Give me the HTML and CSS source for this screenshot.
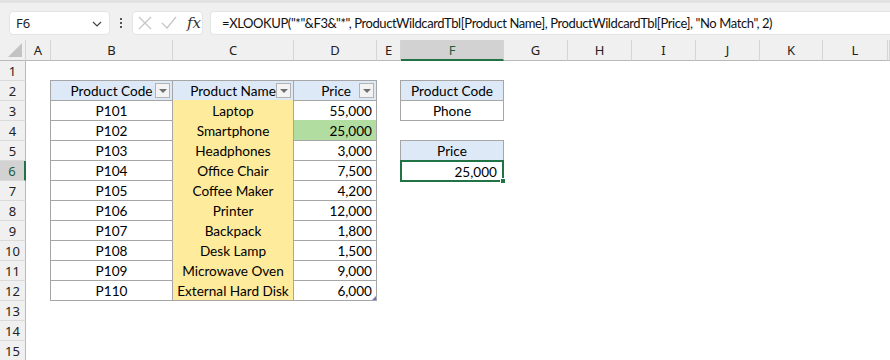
FILE: index.html
```html
<!DOCTYPE html>
<html>
<head>
<meta charset="utf-8">
<link rel="stylesheet" href="styles.css">
</head>
<body>
<div class="toolbar">
  <div class="namebox"><span>F6</span>
    <svg class="chev" width="10" height="6" viewBox="0 0 10 6"><path d="M1 1 L5 5 L9 1" fill="none" stroke="#444" stroke-width="1.2"/></svg>
  </div>
  <div class="dots"><i></i><i></i><i></i></div>
  <div class="iconbox">
    <svg width="14" height="14" viewBox="0 0 14 14"><path d="M1 1 L13 13 M13 1 L1 13" stroke="#c4c4c4" stroke-width="1.2" fill="none"/></svg>
    <svg width="16" height="14" viewBox="0 0 16 14"><path d="M1 7 L6 12 L15 1" stroke="#c4c4c4" stroke-width="1.2" fill="none"/></svg>
    <span class="fx">fx</span>
  </div>
  <div class="formula">=XLOOKUP("*"&amp;F3&amp;"*", ProductWildcardTbl[Product Name], ProductWildcardTbl[Price], "No Match", 2)</div>
</div>
<div class="sheet">
  <div class="corner"><svg width="14" height="14" viewBox="0 0 14 14"><path d="M14 0 L14 14 L0 14 Z" fill="#c3c3c3"/></svg></div>
  <div class="ch">A</div><div class="ch">B</div><div class="ch">C</div><div class="ch">D</div><div class="ch">E</div><div class="ch sel">F</div><div class="ch">G</div><div class="ch">H</div><div class="ch">I</div><div class="ch">J</div><div class="ch">K</div><div class="ch">L</div><div class="ch"></div>

  <div class="rh r1">1</div><div class="rh r2">2</div><div class="rh r3">3</div><div class="rh r4">4</div><div class="rh r5">5</div><div class="rh r6 sel">6</div><div class="rh r7">7</div><div class="rh r8">8</div><div class="rh r9">9</div><div class="rh r10">10</div><div class="rh r11">11</div><div class="rh r12">12</div><div class="rh r13">13</div><div class="rh r14">14</div><div class="rh r15">15</div>

  <div class="c th cB r2 top left">Product Code<span class="fb"></span></div>
  <div class="c th cC r2 top">Product Name<span class="fb"></span></div>
  <div class="c th num cD r2 top">Price<span class="fb"></span></div>

  <div class="c cB r3 left">P101</div><div class="c y cC r3">Laptop</div><div class="c num cD r3">55,000</div>
  <div class="c cB r4 left">P102</div><div class="c y cC r4">Smartphone</div><div class="c num g cD r4">25,000</div>
  <div class="c cB r5 left">P103</div><div class="c y cC r5">Headphones</div><div class="c num cD r5">3,000</div>
  <div class="c cB r6 left">P104</div><div class="c y cC r6">Office Chair</div><div class="c num cD r6">7,500</div>
  <div class="c cB r7 left">P105</div><div class="c y cC r7">Coffee Maker</div><div class="c num cD r7">4,200</div>
  <div class="c cB r8 left">P106</div><div class="c y cC r8">Printer</div><div class="c num cD r8">12,000</div>
  <div class="c cB r9 left">P107</div><div class="c y cC r9">Backpack</div><div class="c num cD r9">1,800</div>
  <div class="c cB r10 left">P108</div><div class="c y cC r10">Desk Lamp</div><div class="c num cD r10">1,500</div>
  <div class="c cB r11 left">P109</div><div class="c y cC r11">Microwave Oven</div><div class="c num cD r11">9,000</div>
  <div class="c cB r12 left">P110</div><div class="c y cC r12">External Hard Disk</div><div class="c num cD r12">6,000<span class="rsz"></span></div>

  <div class="c th cF r2 top left">Product Code</div>
  <div class="c cF r3 left">Phone</div>
  <div class="c th cF r5 top left">Price</div>
  <div class="c num cF r6 left active">25,000<span class="handle"></span></div>
</div>
</body>
</html>
```
FILE: styles.css
```css
* { box-sizing: border-box; }
html, body { margin: 0; padding: 0; }
body {
  width: 890px; height: 360px; overflow: hidden;
  background: #ffffff;
  font-family: "Lato", "Liberation Sans", sans-serif;
}
.toolbar {
  height: 40px;
  background: #f0f0f0;
  border-top: 3px solid #e2e2e2;
  display: flex;
  align-items: center;
  padding: 3px 0 0 9px;
  gap: 0;
}
.namebox {
  width: 101px; height: 24px;
  background: #fff;
  border: 1px solid #e4e4e4;
  border-radius: 4px;
  display: flex; align-items: center; justify-content: space-between;
  padding: 0 7px 0 6px;
  font-family: "Noto Sans", sans-serif;
  font-size: 13px; color: #222;
}
.chev { margin-top: 1px; }
.dots {
  width: 22px; display: flex; flex-direction: column; align-items: center; gap: 2px;
}
.dots i { width: 2px; height: 2px; background: #555; display: block; }
.iconbox {
  width: 71px; height: 24px;
  background: #fff;
  border: 1px solid #e4e4e4;
  border-radius: 4px;
  display: flex; align-items: center;
  padding: 0 0 0 5px; gap: 9px;
}
.fx {
  font-family: "DejaVu Serif", "Liberation Serif", serif;
  font-style: italic; font-size: 15px; color: #333;
  margin-left: 1px;
}
.formula {
  margin-left: 7px;
  flex: 1; height: 24px;
  background: #fff;
  border: 1px solid #e4e4e4;
  border-right: none;
  border-radius: 4px 0 0 4px;
  padding: 0 0 0 11px;
  display: flex; align-items: center;
  font-family: "Lato", sans-serif;
  font-size: 13px; letter-spacing: -0.4px; color: #111;
  white-space: nowrap; overflow: hidden;
}
.sheet {
  display: grid;
  grid-template-columns: 26px 25px 122px 121px 83px 24px 103px 64px 64px 64px 64px 63px 65px 1fr;
  grid-template-rows: 21px repeat(15, 20px);
  font-size: 13.6px;
}
.corner {
  grid-column: 1; grid-row: 1;
  background: #f0f0f0;
  border-right: 1px solid #d4d4d4;
  border-bottom: 1px solid #b9b9b9;
  display: flex; align-items: flex-end; justify-content: flex-end;
  padding: 0 3px 3px 0;
}
.ch {
  grid-row: 1;
  background: #f0f0f0;
  border-right: 1px solid #d4d4d4;
  border-bottom: 1px solid #b9b9b9;
  font-family: "Noto Sans", sans-serif;
  font-size: 13px; color: #222;
  display: flex; align-items: center; justify-content: center;
}
.ch.sel {
  background: #d2d2d2;
  border-bottom: 2px solid #217346;
  color: #1d5d3a;
}
.rh {
  grid-column: 1;
  background: #f0f0f0;
  border-right: 1px solid #b9b9b9;
  border-bottom: 1px solid #dadada;
  font-family: "Noto Sans", sans-serif;
  font-size: 13px; color: #222;
  display: flex; align-items: center; justify-content: center;
}
.rh.sel {
  background: #d2d2d2;
  border-right: 2px solid #217346;
  color: #1d5d3a;
}
.r1 { grid-row: 2; } .r2 { grid-row: 3; } .r3 { grid-row: 4; } .r4 { grid-row: 5; }
.r5 { grid-row: 6; } .r6 { grid-row: 7; } .r7 { grid-row: 8; } .r8 { grid-row: 9; }
.r9 { grid-row: 10; } .r10 { grid-row: 11; } .r11 { grid-row: 12; } .r12 { grid-row: 13; }
.r13 { grid-row: 14; } .r14 { grid-row: 15; } .r15 { grid-row: 16; }
.cB { grid-column: 3; } .cC { grid-column: 4; } .cD { grid-column: 5; } .cF { grid-column: 7; }

.c {
  position: relative;
  border-right: 1px solid #a6a6a6;
  border-bottom: 1px solid #a6a6a6;
  margin-top: -1px;
  height: 21px;
  display: flex; align-items: center; justify-content: center;
  padding-top: 1px;
  color: #000;
  white-space: nowrap;
}
.c.top { border-top: 1px solid #a6a6a6; }
.c.left { border-left: 1px solid #a6a6a6; margin-left: -1px; }
.c.th { background: #dde9f7; }
.c.y { background: #ffeb9c; }
.c.g { background: #b1dda0; }
.c.num { justify-content: flex-end; padding-right: 4px; }
.c.th.num { padding-right: 25px; }
.fb {
  position: absolute; right: 2px; top: 2px;
  width: 15px; height: 15px;
  background: #f3f3f3;
  border: 1px solid #b3b3b3;
}
.fb::after {
  content: ""; position: absolute; left: 3px; top: 5px;
  border-left: 4px solid transparent; border-right: 4px solid transparent;
  border-top: 4px solid #707070;
}
.rsz {
  position: absolute; right: 0; bottom: 0;
  width: 0; height: 0;
  border-left: 4px solid transparent;
  border-bottom: 4px solid #6b6fc9;
}
.c.active {
  border: 2px solid #217346;
  margin-left: -1px; margin-top: -1px;
  height: 22px;
  padding-right: 5px;
}
.handle {
  position: absolute; right: -4px; bottom: -4px;
  width: 6px; height: 6px;
  background: #217346;
  border: 1px solid #fff;
}
```
